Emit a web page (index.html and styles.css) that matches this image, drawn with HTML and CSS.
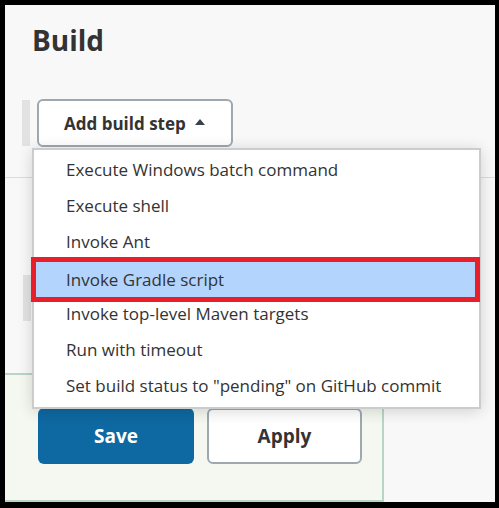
FILE: index.html
```html
<!DOCTYPE html>
<html>
<head>
<meta charset="utf-8">
<link rel="stylesheet" href="styles.css">
</head>
<body>
<div class="page">
  <h1 class="title">Build</h1>
  <div class="step-row">
    <span class="handle"></span>
    <button class="add-btn">Add build step<svg class="caret" width="10" height="6" viewBox="0 0 10 6"><path d="M0 6 L5 0 L10 6 Z" fill="#3b4148"/></svg></button>
  </div>
  <div class="divider"></div>
  <div class="step-row second">
    <span class="handle"></span>
  </div>
  <div class="footer">
    <button class="btn save">Save</button>
    <button class="btn apply">Apply</button>
  </div>
  <ul class="menu">
    <li class="item">Execute Windows batch command</li>
    <li class="item">Execute shell</li>
    <li class="item">Invoke Ant</li>
    <li class="item selected">Invoke Gradle script</li>
    <li class="item">Invoke top-level Maven targets</li>
    <li class="item">Run with timeout</li>
    <li class="item">Set build status to "pending" on GitHub commit</li>
  </ul>
</div>
</body>
</html>
```

FILE: styles.css
```css
html, body {
  margin: 0;
  padding: 0;
  background: #000;
}
body {
  padding: 5px 4px 6px 5px;
  width: 490px;
  height: 497px;
}
.page {
  position: relative;
  width: 490px;
  height: 497px;
  background: #f8f8f8;
  font-family: "Open Sans", "Noto Sans", sans-serif;
  color: #333;
  overflow: hidden;
}
.title {
  margin: 0;
  padding: 17px 0 0 27px;
  font-size: 28px;
  line-height: 36px;
  font-weight: 700;
  color: #333;
}
.step-row {
  margin-top: 41px;
  height: 48px;
  display: flex;
  align-items: center;
  padding-left: 17px;
  gap: 7px;
}
.handle {
  width: 8px;
  height: 46px;
  background: #e2e2e2;
}
.add-btn {
  box-sizing: border-box;
  height: 48px;
  width: 196px;
  border: 2px solid #9ea8b0;
  border-radius: 6px;
  background: #fff;
  font-family: inherit;
  font-size: 17px;
  font-weight: 700;
  color: #333;
  display: flex;
  align-items: center;
  justify-content: flex-start;
  gap: 9px;
  padding: 0 0 0 25px;
}
.caret {
  display: block;
  margin-top: -2px;
}
.divider {
  margin-top: 30px;
  height: 1px;
  background: #dcdcdc;
}
.step-row.second {
  margin-top: 96px;
  padding-left: 18px;
}
.footer {
  box-sizing: border-box;
  margin-top: 51px;
  width: 379px;
  height: 129px;
  background: #f4f8f1;
  border-top: 2px solid #b8d6c6;
  border-right: 2px solid #b8d6c6;
  border-bottom: 2px solid #b8d6c6;
  padding: 33px 0 0 33px;
  display: flex;
  gap: 13px;
}
.btn {
  box-sizing: border-box;
  height: 56px;
  border-radius: 6px;
  font-family: inherit;
  font-size: 19px;
  font-weight: 700;
  padding: 0;
}
.save {
  width: 156px;
  background: #0e68a1;
  border: none;
  color: #fff;
}
.apply {
  width: 155px;
  background: #fff;
  border: 2px solid #9ea8b0;
  color: #333;
}
.menu {
  position: absolute;
  left: 27px;
  top: 143px;
  width: 449px;
  box-sizing: border-box;
  margin: 0;
  padding: 2px 0 3px;
  list-style: none;
  background: #fff;
  border: 2px solid #cccccc;
  box-shadow: 0 2px 14px rgba(0, 0, 0, 0.16);
}
.item {
  height: 36px;
  line-height: 36px;
  padding-left: 32px;
  font-size: 17px;
  color: #333;
  white-space: nowrap;
}
.item.selected {
  height: 35px;
  line-height: 35px;
  margin: 2px 4px -1px 2px;
  padding-left: 30px;
  background: #b3d4fc;
  outline: 5px solid #e81e2a;
}
```
